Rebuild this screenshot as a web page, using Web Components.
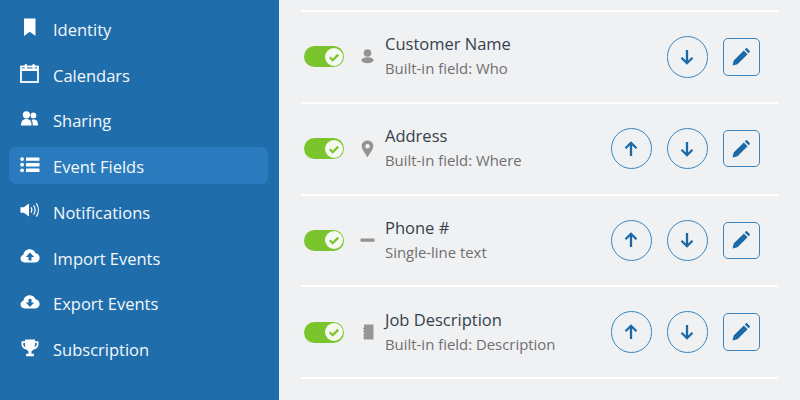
<!DOCTYPE html>
<html><head><meta charset="utf-8"><style>
html,body{margin:0;padding:0;height:400px;overflow:hidden;background:#eff1f3;font-family:"Open Sans",sans-serif}
</style></head><body>
<app-shell>
  <side-nav slot="nav">
    <nav-item icon="bookmark">Identity</nav-item>
    <nav-item icon="calendar">Calendars</nav-item>
    <nav-item icon="users">Sharing</nav-item>
    <nav-item icon="list" active>Event Fields</nav-item>
    <nav-item icon="volume">Notifications</nav-item>
    <nav-item icon="upload">Import Events</nav-item>
    <nav-item icon="download">Export Events</nav-item>
    <nav-item icon="trophy">Subscription</nav-item>
  </side-nav>
  <field-list slot="main">
    <field-row icon="user" name="Customer Name" sub="Built-in field: Who" noup></field-row>
    <field-row icon="pin" name="Address" sub="Built-in field: Where"></field-row>
    <field-row icon="dash" name="Phone #" sub="Single-line text"></field-row>
    <field-row icon="note" name="Job Description" sub="Built-in field: Description"></field-row>
  </field-list>
</app-shell>
<script>
const ICONS={
bookmark:[14,18,'<path d="M1 .5h11.500v17.500L6.750 13.800 1 18z" fill="#fff"/>'],
calendar:[20,20,'<g fill="none" stroke="#fff"><rect x="1" y="3.500" width="17" height="15.500" stroke-width="1.800"/><path d="M1 6.700h17" stroke-width="2.600"/></g><rect x="4.600" y="1" width="2.400" height="5" rx="1.200" fill="#fff"/><rect x="12.400" y="1" width="2.400" height="5" rx="1.200" fill="#fff"/>'],
users:[20,16,'<g fill="#fff" transform="translate(-1 0)"><circle cx="7.400" cy="3.800" r="3.600"/><circle cx="14.400" cy="4.400" r="2.900"/><path d="M2 14.500c0-4.600 1.800-6.600 5.400-6.600s5.200 2 5.200 6.600z"/><path d="M13.800 14.500H19c0-4.400-1.200-6-4.500-6-.8 0-1.400.1-2 .4 1 1.400 1.300 3.500 1.300 5.600z"/></g>'],
list:[20,16,'<g fill="#fff"><circle cx="2.100" cy="2.100" r="1.900"/><circle cx="2.100" cy="7.700" r="1.900"/><circle cx="2.100" cy="13.300" r="1.900"/><rect x="6" y=".4" width="13.500" height="3.400" rx=".6"/><rect x="6" y="6" width="13.500" height="3.400" rx=".6"/><rect x="6" y="11.600" width="13.500" height="3.400" rx=".6"/></g>'],
volume:[20,16,'<path d="M.5 5.200h3.300L9 1.500v13L3.800 10.800H.5z" fill="#fff"/><g fill="none" stroke="#fff" stroke-width="1.200"><path d="M11 5.400c1 1.500 1 3.700 0 5.200"/><path d="M13.600 3.400c1.800 2.700 1.800 6.500 0 9.200"/><path d="M16.300 1.400c2.700 3.900 2.700 9.300 0 13.200"/></g>'],
upload:[20,16,'<path fill-rule="evenodd" d="M4.500 14.500C2.200 14.500.5 12.800.5 10.600c0-1.800 1.200-3.300 2.900-3.800C3.700 3.600 6.300 1.200 9.600 1.200c2.700 0 5 1.600 5.900 4 2.400.1 4.100 2.300 4.100 4.700 0 2.600-2 4.600-4.600 4.600zM10 4.500 5.800 9h2.700v3.500h3V9h2.700z" fill="#fff"/>'],
download:[20,16,'<path fill-rule="evenodd" d="M4.500 14.500C2.200 14.500.5 12.800.5 10.600c0-1.800 1.200-3.300 2.900-3.800C3.700 3.600 6.300 1.200 9.600 1.200c2.700 0 5 1.600 5.900 4 2.400.1 4.100 2.300 4.100 4.700 0 2.600-2 4.600-4.600 4.600zM10 13l4.200-4.500h-2.700V5h-3v3.500H5.800z" fill="#fff"/>'],
trophy:[18,18,'<path fill-rule="evenodd" fill="#fff" d="M4 .5h10v1.800h3.500v3c0 2.800-2.200 5-5 5.300-.6.800-1.300 1.400-2 1.700v2.400h2.400v2.600H5.100v-2.600h2.400v-2.400c-.7-.3-1.400-.9-2-1.700-2.800-.3-5-2.500-5-5.300v-3H4zM2.300 4v1.300c0 1.200.7 2.200 2.100 2.900C4.100 6.900 4 5.500 4 4zm13.400 0H14c0 1.500-.1 2.900-.4 4.200 1.400-.7 2.100-1.700 2.100-2.900z"/>'],
user:[16,18,'<circle cx="7.500" cy="5" r="3.800" fill="#939393"/><ellipse cx="7.500" cy="12.200" rx="6" ry="3" fill="#939393"/>'],
pin:[14,18,'<path fill-rule="evenodd" fill="#939393" d="M6.500.5C3 .5.700 3 .7 5.900c0 3.300 3.800 7.900 5.800 11.300 2-3.400 5.800-8 5.800-11.300C12.300 3 10 .5 6.500.5zm0 3.400a2.300 2.300 0 1 1 0 4.600 2.300 2.300 0 0 1 0-4.600z"/>'],
dash:[16,18,'<rect x=".5" y="7.500" width="14" height="3.200" rx=".5" fill="#939393"/>'],
note:[14,18,'<path fill="#979797" d="M3 1.500h9.500v15H3v-1.200H2v-1.100h1v-1.700H2v-1.100h1V8.700H2V7.600h1V5.900H2V4.800h1z"/>']
};
function svg(n){const [w,h,b]=ICONS[n];return `<svg width="${w}" height="${h}" viewBox="0 0 ${w} ${h}" aria-hidden="true">${b}</svg>`}

class AppShell extends HTMLElement{constructor(){super();this.attachShadow({mode:'open'}).innerHTML=`<style>
:host{display:grid;grid-template-columns:279px 1fr;height:400px;width:800px}
</style><slot name="nav"></slot><slot name="main"></slot>`}}
class SideNav extends HTMLElement{constructor(){super();this.attachShadow({mode:'open'}).innerHTML=`<style>
:host{display:flex;flex-direction:column;gap:8.75px;background:#206dab;padding:9.750px 11px 0 9px;height:400px;box-sizing:border-box}
</style><slot></slot>`}}
class NavItem extends HTMLElement{constructor(){super();const i=this.getAttribute('icon');this.attachShadow({mode:'open'}).innerHTML=`<style>
:host{display:flex;align-items:center;height:37px;border-radius:7px;font:16.500px/24px "Open Sans",sans-serif;color:#f4f8fb;flex:none}
:host([active]){background:#2a7bbd}
.i{width:42px;margin-right:2px;display:flex;justify-content:center;padding-bottom:2px;box-sizing:border-box;flex:none}
.i svg{display:block}
.t{white-space:nowrap;padding-top:3px}
</style><span class="i">${svg(i)}</span><span class="t"><slot></slot></span>`}}
class FieldList extends HTMLElement{constructor(){super();this.attachShadow({mode:'open'}).innerHTML=`<style>
:host{display:flex;flex-direction:column;margin:10px 22px 0;height:390px;box-sizing:border-box;border-top:2px solid #fff;background:#eff1f3;align-self:start}
</style><slot></slot>`}}
class ToggleSwitch extends HTMLElement{constructor(){super();this.attachShadow({mode:'open'}).innerHTML=`<style>
:host{display:flex;align-items:center;justify-content:flex-end;width:40px;height:21px;border-radius:11px;background:#7ac52e;padding-right:1.500px;box-sizing:border-box;flex:none}
svg{display:block}
</style><svg width="18" height="18" viewBox="0 0 18 18" aria-hidden="true"><circle cx="9" cy="9" r="9" fill="#f6f8f2"/><path d="M4.800 9.300l2.900 2.900 5.500-5.600" fill="none" stroke="#7ac52e" stroke-width="2.300"/></svg>`}}
class RoundButton extends HTMLElement{constructor(){super();const up=this.getAttribute('dir')==='up';this.attachShadow({mode:'open'}).innerHTML=`<style>
:host{display:flex;align-items:center;justify-content:center;width:41.500px;height:41.500px;border-radius:50%;border:1.600px solid #3a85bd;box-sizing:border-box;flex:none}
svg{display:block}
</style><svg width="14" height="16" viewBox="0 0 14 16" aria-hidden="true" style="transform:${up?'none':'rotate(180deg)'}"><path d="M7 15V2M1.500 7.300L7 1.800l5.500 5.500" fill="none" stroke="#1c69a8" stroke-width="2.300"/></svg>`}}
class EditButton extends HTMLElement{constructor(){super();this.attachShadow({mode:'open'}).innerHTML=`<style>
:host{display:flex;align-items:center;justify-content:center;width:37.500px;height:37.500px;border-radius:5px;border:1.600px solid #3a85bd;box-sizing:border-box;flex:none}
svg{display:block}
</style><svg width="18" height="18" viewBox="0 0 18 18" aria-hidden="true"><path fill="#1c69a8" d="M.5 17.500l1.200-5L11.800 2.400l3.800 3.800L5.500 16.300zM12.800 1.400l1-1c.4-.4 1-.4 1.400 0l2.400 2.400c.4.400.4 1 0 1.400l-1 1z"/></svg>`}}
class FieldRow extends HTMLElement{constructor(){super();const a=n=>this.getAttribute(n);this.attachShadow({mode:'open'}).innerHTML=`<style>
:host{display:flex;align-items:center;height:91.750px;box-sizing:border-box;border-bottom:2px solid #fff;padding:0 18px 0 3px;flex:none}
.ic{width:18px;margin-left:14.500px;margin-right:8.500px;display:flex;justify-content:center;flex:none}
.ic svg{display:block}
.txt{flex:1;min-width:0;display:flex;flex-direction:column;padding-bottom:2px}
.n{font:16.500px/24px "Open Sans",sans-serif;color:#36414d}
.s{font:14.900px/22px "Open Sans",sans-serif;color:#707070;margin-top:1px}
.act{display:flex;align-items:center;gap:14.500px}
.sp{width:41.500px;flex:none}
</style><toggle-switch></toggle-switch><span class="ic">${svg(a('icon'))}</span><div class="txt"><span class="n">${a('name')}</span><span class="s">${a('sub')}</span></div><div class="act">${this.hasAttribute('noup')?'<span class="sp"></span>':'<round-button dir="up"></round-button>'}<round-button dir="down"></round-button><edit-button></edit-button></div>`}}
customElements.define('app-shell',AppShell);
customElements.define('side-nav',SideNav);
customElements.define('nav-item',NavItem);
customElements.define('field-list',FieldList);
customElements.define('toggle-switch',ToggleSwitch);
customElements.define('round-button',RoundButton);
customElements.define('edit-button',EditButton);
customElements.define('field-row',FieldRow);
</script>
</body></html>
